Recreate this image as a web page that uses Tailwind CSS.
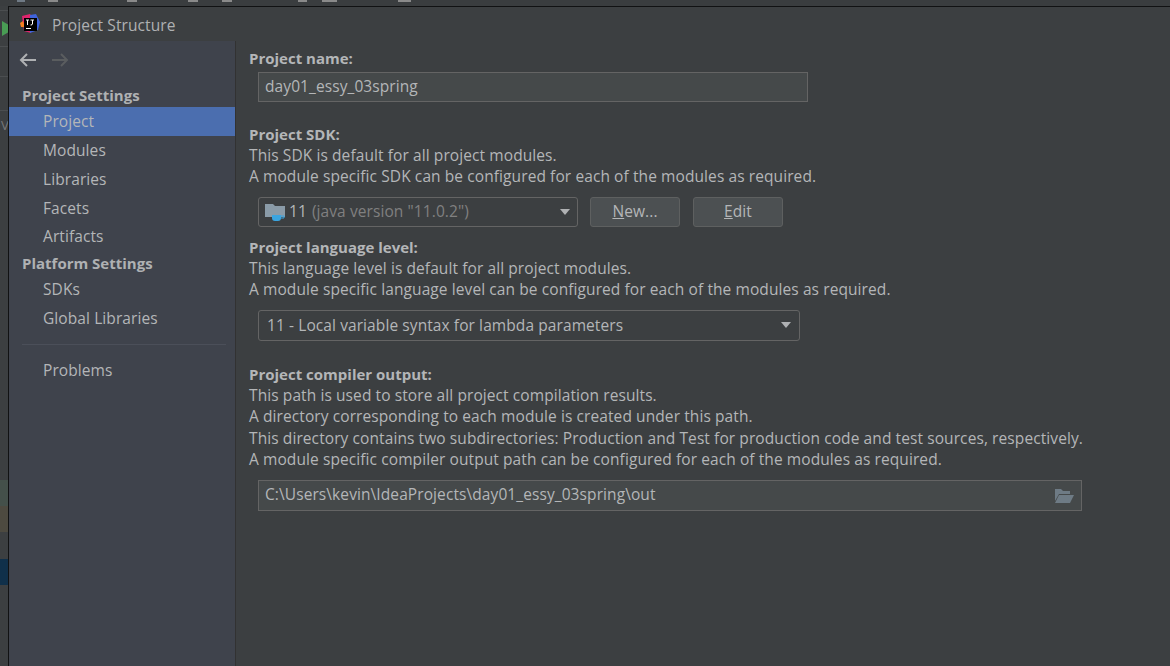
<!DOCTYPE html>
<html lang="en">
<head>
    <meta charset="UTF-8">
    <title>Project Structure</title>
    <script src="https://cdn.jsdelivr.net/npm/@tailwindcss/browser@4"></script>
</head>
<body class="w-[1170px] h-[666px] overflow-hidden bg-[#3c3f41] text-[#b4b6b8] font-['Open_Sans','Noto_Sans',sans-serif] text-[15.5px] tracking-[0.09px] flex flex-col">

    <!-- window behind the dialog: only a sliver of it shows -->
    <div class="h-[6px] shrink-0 bg-[#3a3d3f] flex items-start pl-[17px] overflow-hidden">
        <div class="w-[8px] h-[2px] bg-[#6f7a85]"></div>
        <div class="ml-[23px] w-[10px] h-[2px] bg-[#8a8a8a]"></div>
        <div class="ml-[69px] w-[10px] h-[2px] bg-[#8a8a8a]"></div>
        <div class="ml-[51px] w-[10px] h-[2px] bg-[#8a8a8a]"></div>
        <div class="ml-[24px] w-[10px] h-[2px] bg-[#8a8a8a]"></div>
        <div class="ml-[66px] w-[9px] h-[2px] bg-[#8a8a8a]"></div>
        <div class="ml-[15px] w-[15px] h-[2px] bg-[#8a8a8a]"></div>
        <div class="ml-[61px] w-[13px] h-[2px] bg-[#8a8a8a]"></div>
    </div>

    <div class="flex-1 flex min-h-0">
        <div class="w-[8px] shrink-0 flex flex-col bg-[#3c3f41] overflow-hidden">
            <div class="h-[5px] shrink-0 border-b border-[#4b4e50]"></div>
            <div class="h-[36px] shrink-0 flex items-center border-b border-[#4b4e50]">
                <svg width="8" height="15" viewBox="0 0 8 15"><path d="M2 0L8 3.5V11.5L2 15Z" fill="#499c54"/></svg>
            </div>
            <div class="h-[30px] shrink-0 border-b border-[#4b4e50]"></div>
            <div class="h-[34px] shrink-0 border-b border-[#4b4e50]"></div>
            <div class="h-[369px] shrink-0 pl-[1px] pt-[5px] text-[13px] leading-[18px] text-[#77797b]">V</div>
            <div class="h-[26px] shrink-0 bg-[#44504a]"></div>
            <div class="h-[26px] shrink-0 bg-[#4d4a40]"></div>
            <div class="h-[27px] shrink-0 bg-[#3c3f41]"></div>
            <div class="h-[26px] shrink-0 bg-[#10304a]"></div>
        </div>

        <!-- dialog -->
        <div class="flex-1 flex flex-col border-t border-l border-[#111213] min-w-0">
            <div class="h-[34px] shrink-0 flex items-center pl-[11px] gap-[12px] bg-[#3c3f41]">
                <svg width="20" height="20" viewBox="0 0 20 20" class="shrink-0">
                    <path d="M2 2L10 0L13 4L11 19L4 17Z" fill="#e0246e"/>
                    <path d="M10 1L16 0L20 8L18 16L10 19Z" fill="#3f63dc"/>
                    <path d="M0 9L3 7L5 13L1 13Z" fill="#f58220"/>
                    <rect x="4" y="4" width="13" height="13" fill="#000"/>
                    <path d="M6 6H9M7.5 6V11M10.5 6H14M12.5 6V10Q12.5 11 10.5 11" stroke="#fff" stroke-width="1" fill="none"/>
                    <rect x="6" y="14" width="5" height="1" fill="#fff"/>
                </svg>
                <span class="text-[15.5px] pt-[4px] text-[#afb1b3]">Project Structure</span>
            </div>

            <div class="flex-1 flex min-h-0">
                <!-- sidebar -->
                <div class="w-[227px] shrink-0 bg-[#3f434c] border-r border-[#323232] flex flex-col">
                    <div class="h-[37px] shrink-0 flex items-center pl-[10px] gap-[16px]">
                        <svg width="17" height="14" viewBox="0 0 17 14" fill="none" stroke="#afb1b3" stroke-width="2"><path d="M17 7H2M8 1L2 7L8 13"/></svg>
                        <svg width="17" height="14" viewBox="0 0 17 14" fill="none" stroke="#5a5d5f" stroke-width="2"><path d="M0 7H15M9 1L15 7L9 13"/></svg>
                    </div>
                    <div class="h-[29px] shrink-0 flex items-center pl-[13px] pt-[5px] font-bold text-[15px] tracking-normal text-[#afb1b3]">Project Settings</div>
                    <div class="h-[29px] shrink-0 flex items-center pl-[34px] bg-[#4b6eaf]">Project</div>
                    <div class="h-[29px] shrink-0 flex items-center pl-[34px]">Modules</div>
                    <div class="h-[29px] shrink-0 flex items-center pl-[34px]">Libraries</div>
                    <div class="h-[29px] shrink-0 flex items-center pl-[34px]">Facets</div>
                    <div class="h-[27px] shrink-0 flex items-center pl-[34px]">Artifacts</div>
                    <div class="h-[25px] shrink-0 flex items-center pl-[13px] pt-[1px] font-bold text-[15px] tracking-normal text-[#afb1b3]">Platform Settings</div>
                    <div class="h-[29px] shrink-0 flex items-center pl-[34px]">SDKs</div>
                    <div class="h-[29px] shrink-0 flex items-center pl-[34px]">Global Libraries</div>
                    <div class="h-[23px] shrink-0 flex items-center pl-[13px] pr-[9px]"><div class="h-px w-full bg-[#4b4f59]"></div></div>
                    <div class="h-[29px] shrink-0 flex items-center pl-[34px]">Problems</div>
                </div>

                <!-- main panel -->
                <div class="flex-1 bg-[#3c3f41] pl-[13px] pt-[7px] leading-[21px] min-w-0">
                    <div class="font-bold text-[15px] tracking-normal">Project name:</div>
                    <div class="mt-[3px] ml-[9px] w-[550px] h-[30px] flex items-center px-[6px] pb-[2px] bg-[#45494a] border border-[#646464]">day01_essy_03spring</div>

                    <div class="mt-[22px] font-bold text-[15px] tracking-normal">Project SDK:</div>
                    <div>This SDK is default for all project modules.</div>
                    <div>A module specific SDK can be configured for each of the modules as required.</div>
                    <div class="mt-[10px] ml-[9px] flex h-[30px] gap-[12px]">
                        <div class="w-[320px] flex items-center px-[6px] border border-[#646464] rounded-[3px]">
                            <svg width="21" height="20" viewBox="0 0 21 20" class="shrink-0">
                                <path d="M0 2H8L10 4H20V15H0Z" fill="#8a9ba8"/>
                                <path d="M7 13H16V16Q16 19 13 19H10Q7 19 7 16Z" fill="#3ba5e0"/>
                                <path d="M16 14H19V16H16" stroke="#3ba5e0" fill="none"/>
                            </svg>
                            <span class="ml-[3px] pb-[2px]">11</span>
                            <span class="ml-[5px] pb-[2px] text-[#808080]">(java version "11.0.2")</span>
                            <svg width="12" height="7" viewBox="0 0 12 7" class="ml-auto shrink-0"><path d="M1 0H11L6 6Z" fill="#afb1b3"/></svg>
                        </div>
                        <div class="w-[90px] flex items-center justify-center pb-[2px] bg-[#4c5052] border border-[#5e6060] rounded-[3px]"><span><u>N</u>ew...</span></div>
                        <div class="ml-[1px] w-[90px] flex items-center justify-center pb-[2px] bg-[#4c5052] border border-[#5e6060] rounded-[3px]"><span><u>E</u>dit</span></div>
                    </div>

                    <div class="mt-[10px] font-bold text-[15px] tracking-normal">Project language level:</div>
                    <div>This language level is default for all project modules.</div>
                    <div>A module specific language level can be configured for each of the modules as required.</div>
                    <div class="mt-[10px] ml-[9px] w-[542px] h-[31px] flex items-center pl-[8px] pr-[7px] border border-[#646464] rounded-[3px]">
                        <span>11 - Local variable syntax for lambda parameters</span>
                        <svg width="12" height="7" viewBox="0 0 12 7" class="ml-auto shrink-0"><path d="M1 0H11L6 6Z" fill="#afb1b3"/></svg>
                    </div>

                    <div class="mt-[23px] font-bold text-[15px] tracking-normal">Project compiler output:</div>
                    <div>This path is used to store all project compilation results.</div>
                    <div>A directory corresponding to each module is created under this path.</div>
                    <div class="mt-[1px]">This directory contains two subdirectories: Production and Test for production code and test sources, respectively.</div>
                    <div>A module specific compiler output path can be configured for each of the modules as required.</div>
                    <div class="mt-[10px] ml-[9px] w-[824px] h-[31px] flex items-center px-[6px] pb-[2px] bg-[#45494a] border border-[#646464]">
                        <span>C:\Users\kevin\IdeaProjects\day01_essy_03spring\out</span>
                        <svg width="20" height="16" viewBox="0 0 20 16" class="ml-auto mt-[2px] mr-[1px] shrink-0">
                            <path d="M1 1H7L9 3H16V6H5L1 13Z" fill="#6e7b85"/>
                            <path d="M5 7H20L16 15H1Z" fill="#6e7b85"/>
                        </svg>
                    </div>
                </div>
            </div>
        </div>
    </div>
</body>
</html>
